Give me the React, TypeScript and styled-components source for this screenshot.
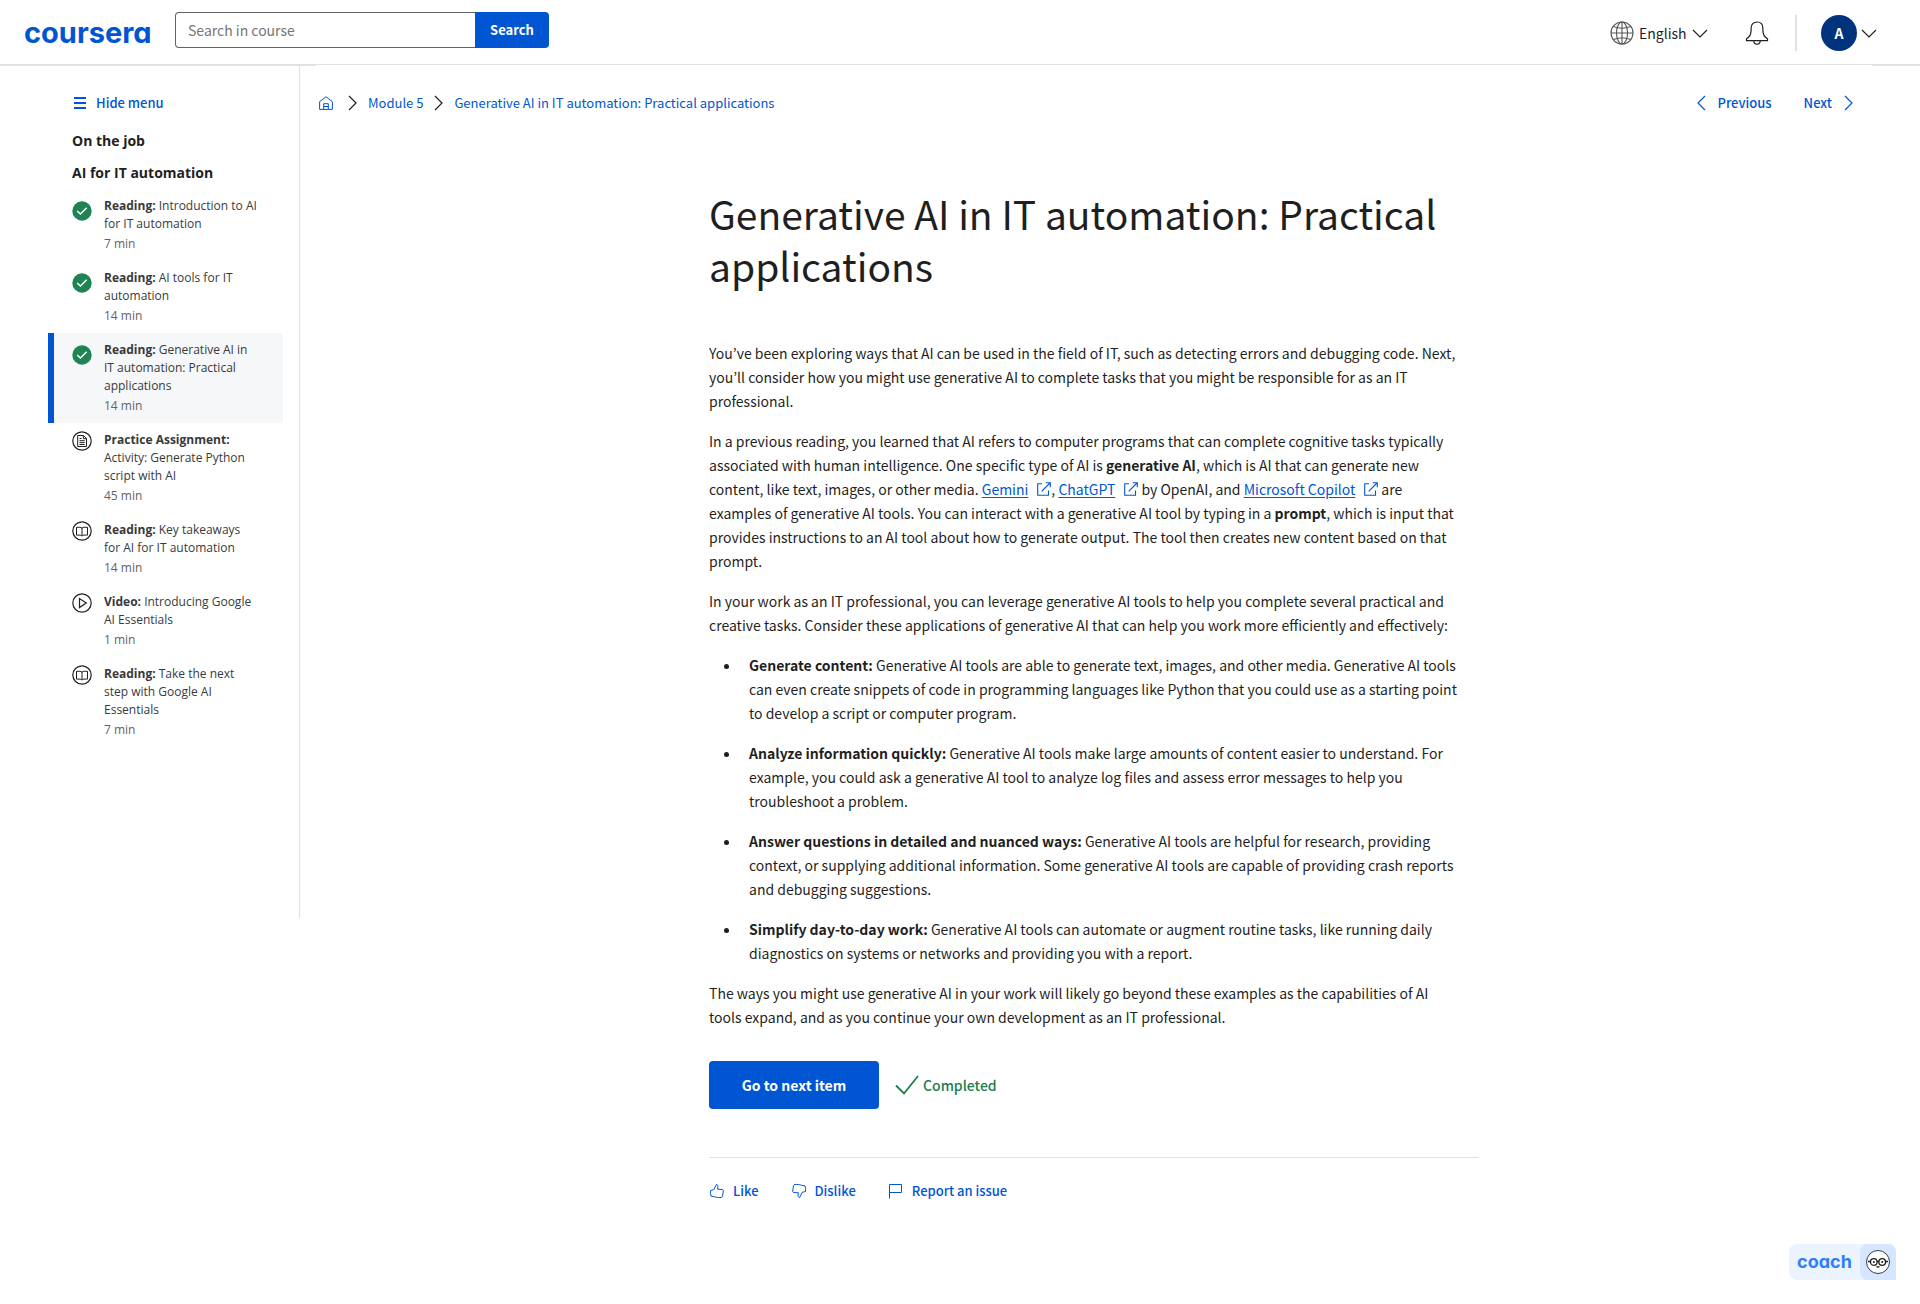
import React from "react";
import styled, { createGlobalStyle } from "styled-components";

const sans = `"Source Sans Pro", "Noto Sans CJK JP", "Noto Sans CJK SC", sans-serif`;
const openSans = `"Open Sans", "Noto Sans", sans-serif`;
const logoFont = `Inter, "Open Sans", sans-serif`;

const blue = "#0056d2";
const ink = "#1f1f1f";
const line = "#e1e1e1";
const green = "#1d7c50";

const GlobalStyle = createGlobalStyle`
  *, *::before, *::after { box-sizing: border-box; }
  body { margin: 0; background: #fff; color: ${ink}; font-family: ${sans}; font-size: 14px; line-height: 24px; }
  button, input, select { font: inherit; color: inherit; margin: 0; padding: 0; border: 0; background: none; }
  button { cursor: pointer; }
  a { color: ${blue}; text-decoration: none; }
  svg { display: block; flex: none; }
  h1, h2, p, ul { margin: 0; padding: 0; }
`;

const Header = styled.header`
  display: flex;
  align-items: center;
  height: 66px;
  padding: 2px 43px 0 24px;
  border-bottom: 2px solid ${line};
`;

const Logo = styled.a`
  width: 127px;
  font: 700 29px/36px ${logoFont};
  font-feature-settings: "cv11";
`;

const SearchForm = styled.form`
  display: flex;
  height: 36px;
  margin: 0 auto 6px 24px;
`;

const SearchInput = styled.input`
  width: 300px;
  padding: 0 12px;
  border: 1px solid #636363;
  border-right: 0;
  border-radius: 4px 0 0 4px;
  &::placeholder { color: #757575; opacity: 1; }
`;

const SearchButton = styled.button`
  width: 74px;
  border-radius: 0 4px 4px 0;
  background: ${blue};
  color: #fff;
  font-size: 13px;
  font-weight: 700;
`;

const Language = styled.label`
  display: flex;
  align-items: center;
  gap: 5px;
`;

const LanguageSelect = styled.select`
  appearance: none;
  height: 24px;
`;

const BellButton = styled.button`
  margin: 0 26px 0 37px;
`;

const Account = styled.button`
  display: flex;
  align-items: center;
  gap: 4px;
  padding-left: 24px;
  border-left: 2px solid ${line};
`;

const Avatar = styled.span`
  width: 36px;
  border-radius: 50%;
  background: #00337d;
  color: #fff;
  font-weight: 700;
  line-height: 36px;
  text-align: center;
`;

const Page = styled.div`
  display: flex;
  align-items: flex-start;
`;

const Sidebar = styled.aside`
  flex: none;
  width: 300px;
  padding: 25px 16px 171px 48px;
  border-right: 1px solid ${line};
`;

const MenuToggle = styled.button`
  display: flex;
  align-items: center;
  gap: 10px;
  height: 24px;
  margin: 0 0 14px 26px;
  color: ${blue};
  font-size: 13px;
  font-weight: 500;
`;

const SectionTitle = styled.h2`
  padding-left: 24px;
  font: 700 14px/24px ${openSans};
  margin-bottom: 8px;
  & + & { margin-bottom: 4px; }
`;

const Lessons = styled.ul`
  list-style: none;
`;

const Lesson = styled.a<{ $active?: boolean }>`
  display: flex;
  gap: 12px;
  padding: 8px 24px 8px 18px;
  border-left: 6px solid ${(p) => (p.$active ? blue : "transparent")};
  background: ${(p) => (p.$active ? "#f5f7f8" : "transparent")};
  color: #373a3c;
  font: 400 12px/18px ${openSans};
`;

const LessonIcon = styled.span<{ $done: boolean }>`
  padding-top: ${(p) => (p.$done ? 4 : 0)}px;
`;

const LessonKind = styled.strong`
  font-weight: 700;
`;

const Duration = styled.span`
  display: block;
  padding-top: 2px;
  color: #636363;
`;

const Main = styled.main`
  flex: 1;
  min-width: 0;
  margin: -1px 48px 0 16px;
  background: #fff;
`;

const TopNav = styled.div`
  display: flex;
  align-items: center;
  justify-content: space-between;
  padding: 26px 19px 0 3px;
  font-size: 13px;
`;

const Crumbs = styled.nav`
  display: flex;
  align-items: center;
  gap: 11px;
`;

const HomeLink = styled.a`
  margin-right: 4px;
`;

const Pager = styled.nav`
  display: flex;
  gap: 32px;
  font-weight: 500;
`;

const PagerLink = styled.a`
  display: flex;
  align-items: center;
  gap: 12px;
`;

const Article = styled.article`
  max-width: 770px;
  margin: 0 auto;
  padding: 72px 0 96px;
`;

const Title = styled.h1`
  margin-bottom: 50px;
  font-size: 39px;
  font-weight: 400;
  line-height: 52px;
`;

const Body = styled.div`
  padding-right: 20px;
`;

const Paragraph = styled.p`
  margin-bottom: 16px;
`;

const Bullets = styled.ul`
  padding-left: 32px;
`;

const Bullet = styled.li`
  margin-bottom: 16px;
  padding-left: 8px;
`;

const ExternalLink = styled.a`
  text-decoration: underline;
  text-underline-offset: 2px;
`;

const ExternalIcon = styled.svg`
  display: inline-block;
  margin: 0 0 0 9px;
  vertical-align: -1px;
`;

const Actions = styled.div`
  display: flex;
  align-items: center;
  gap: 16px;
  margin-top: 32px;
`;

const NextButton = styled.button`
  width: 170px;
  height: 48px;
  border-radius: 4px;
  background: ${blue};
  color: #fff;
  font-weight: 700;
`;

const Completed = styled.span`
  display: flex;
  align-items: center;
  gap: 4px;
  color: ${green};
  font-weight: 500;
`;

const Feedback = styled.div`
  display: flex;
  gap: 32px;
  margin-top: 48px;
  padding-top: 21px;
  border-top: 1px solid ${line};
`;

const FeedbackButton = styled.button`
  display: flex;
  align-items: center;
  gap: 8px;
  color: ${blue};
  font-size: 13px;
  font-weight: 500;
`;

const Coach = styled.button`
  position: fixed;
  right: 24px;
  bottom: 24px;
  display: flex;
  border-radius: 8px 8px 0 8px;
  background: #ebf3ff;
  color: #2d7ff9;
  font: 700 18px/36px ${logoFont};
  font-feature-settings: "cv11";
`;

const CoachLabel = styled.span`
  width: 71px;
  text-align: center;
`;

const CoachFace = styled.span`
  padding: 6px;
  border-radius: 8px 8px 0 8px;
  background: #d6e6ff;
`;

const paths = {
  down: "M1 1l7 7 7-7",
  right: "M1 1l7 7-7 7",
  left: "M8 1L1 8l7 7",
};

function Chevron({ dir, color = ink }: { dir: keyof typeof paths; color?: string }) {
  const [w, h] = dir === "down" ? [16, 9] : [9, 16];
  return (
    <svg width={w} height={h} fill="none" stroke={color} strokeWidth="1.2" aria-hidden="true">
      <path d={paths[dir]} />
    </svg>
  );
}

function DoneIcon() {
  return (
    <svg width="20" height="20" viewBox="0 0 20 20" fill="none" aria-label="Completed">
      <circle cx="10" cy="10" r="9.7" fill="#1f8354" />
      <path d="M5.2 9.9l3.2 3.2 6.3-6.4" stroke="#fff" strokeWidth="1.4" />
    </svg>
  );
}

function KindIcon({ kind }: { kind: string }) {
  return (
    <svg width="20" height="20" viewBox="0 0 20 20" fill="none" stroke={ink} aria-hidden="true">
      <circle cx="10" cy="10" r="9.2" strokeWidth="1.2" />
      {kind === "Video:" && <path d="M7.5 5.6v9l6.8-4.5z" strokeWidth="1.2" />}
      {kind === "Reading:" && (
        <path d="M10 7v8.2M10 7.2C9.4 6.5 8.7 6.3 7.8 6.3H4.5v7.8h3.7c.8 0 1.4.3 1.8 1 .4-.7 1-1 1.8-1h3.7V6.300h-3.300c-.9 0-1.6.2-2.200.9z" />
      )}
      {kind === "Practice Assignment:" && (
        <path d="M5.7 4.5h5.800l3 3v8H5.7zM11.3 4.5v3.2h3.200M7.5 7.5h2M7.5 9.7h5.200M7.5 11.6h5.200M7.5 13.5h5.200" />
      )}
    </svg>
  );
}

function External() {
  return (
    <ExternalIcon width="14" height="14" viewBox="0 0 14 14" fill="none" stroke={blue} strokeWidth="1.1" aria-hidden="true">
      <path d="M5 1.8H.7v11.500h10.800V8.5M4.7 9.3L13 1M8.7.7h4.600v4.600" />
    </ExternalIcon>
  );
}

const lessons = [
  { kind: "Reading:", title: "Introduction to AI for IT automation", time: "7 min", done: true },
  { kind: "Reading:", title: "AI tools for IT automation", time: "14 min", done: true },
  { kind: "Reading:", title: "Generative AI in IT automation: Practical applications", time: "14 min", done: true, active: true },
  { kind: "Practice Assignment:", title: "Activity: Generate Python script with AI", time: "45 min", done: false },
  { kind: "Reading:", title: "Key takeaways for AI for IT automation", time: "14 min", done: false },
  { kind: "Video:", title: "Introducing Google AI Essentials", time: "1 min", done: false },
  { kind: "Reading:", title: "Take the next step with Google AI Essentials", time: "7 min", done: false },
];

const bullets = [
  {
    lead: "Generate content:",
    text: "Generative AI tools are able to generate text, images, and other media. Generative AI tools can even create snippets of code in programming languages like Python that you could use as a starting point to develop a script or computer program.",
  },
  {
    lead: "Analyze information quickly:",
    text: "Generative AI tools make large amounts of content easier to understand. For example, you could ask a generative AI tool to analyze log files and assess error messages to help you troubleshoot a problem.",
  },
  {
    lead: "Answer questions in detailed and nuanced ways:",
    text: "Generative AI tools are helpful for research, providing context, or supplying additional information. Some generative AI tools are capable of providing crash reports and debugging suggestions.",
  },
  {
    lead: "Simplify day-to-day work:",
    text: "Generative AI tools can automate or augment routine tasks, like running daily diagnostics on systems or networks and providing you with a report.",
  },
];

export default function App() {
  return (
    <>
      <GlobalStyle />
      <Header>
        <Logo href="#">coursera</Logo>
        <SearchForm role="search" onSubmit={(e) => e.preventDefault()}>
          <SearchInput type="text" placeholder="Search in course" aria-label="Search in course" />
          <SearchButton type="submit">Search</SearchButton>
        </SearchForm>
        <Language>
          <svg width="24" height="24" viewBox="0 0 24 24" fill="none" stroke="#555" strokeWidth="1.1" aria-hidden="true">
            <circle cx="12" cy="12" r="11" />
            <ellipse cx="12" cy="12" rx="5.5" ry="11" />
            <path d="M12 1v22M1 12h22M3.5 5.500c5 2 12 2 17 0M3.5 18.500c5-2 12-2 17 0" />
          </svg>
          <LanguageSelect aria-label="Language" defaultValue="en">
            <option value="en">English</option>
          </LanguageSelect>
          <Chevron dir="down" />
        </Language>
        <BellButton type="button" aria-label="Notifications">
          <svg width="24" height="24" viewBox="0 0 24 24" fill="none" stroke={ink} strokeWidth="1.2" aria-hidden="true">
            <path d="M1.5 19.6v-1.800c2.800-1.600 4.600-4.300 4.600-8V7.3C6.1 3.4 8.5 1 12 1s5.900 2.400 5.900 6.300v2.500c0 3.700 1.800 6.400 4.600 8v1.800zM8.8 19.8c0 2 1.300 3.400 3.200 3.400s3.200-1.400 3.200-3.400" />
          </svg>
        </BellButton>
        <Account type="button" aria-label="Account menu">
          <Avatar>A</Avatar>
          <Chevron dir="down" />
        </Account>
      </Header>

      <Page>
        <Sidebar>
          <MenuToggle type="button">
            <svg width="12" height="12" stroke={blue} strokeWidth="2" aria-hidden="true">
              <path d="M0 1h12M0 6h12M0 11h12" />
            </svg>
            Hide menu
          </MenuToggle>
          <SectionTitle>On the job</SectionTitle>
          <SectionTitle>AI for IT automation</SectionTitle>
          <Lessons>
            {lessons.map((l) => (
              <li key={l.title}>
                <Lesson href="#" $active={l.active}>
                  <LessonIcon $done={l.done}>{l.done ? <DoneIcon /> : <KindIcon kind={l.kind} />}</LessonIcon>
                  <span>
                    <LessonKind>{l.kind}</LessonKind> {l.title}
                    <Duration>{l.time}</Duration>
                  </span>
                </Lesson>
              </li>
            ))}
          </Lessons>
        </Sidebar>

        <Main>
          <TopNav>
            <Crumbs aria-label="Breadcrumb">
              <HomeLink href="#" aria-label="Home">
                <svg width="14" height="14" viewBox="0 0 14 14" fill="none" stroke={blue} aria-hidden="true">
                  <path d="M.6 5.7L7 .8l6.400 4.900v7.700H.6zM4.7 13.2V7.7h4.600v5.500M4.7 10.5h4.600" />
                </svg>
              </HomeLink>
              <Chevron dir="right" />
              <a href="#">Module 5</a>
              <Chevron dir="right" />
              <a href="#">Generative AI in IT automation: Practical applications</a>
            </Crumbs>
            <Pager aria-label="Items">
              <PagerLink href="#">
                <Chevron dir="left" color={blue} />
                Previous
              </PagerLink>
              <PagerLink href="#">
                Next
                <Chevron dir="right" color={blue} />
              </PagerLink>
            </Pager>
          </TopNav>

          <Article>
            <Title>Generative AI in IT automation: Practical applications</Title>
            <Body>
              <Paragraph>
                You’ve been exploring ways that AI can be used in the field of IT, such as detecting errors and
                debugging code. Next, you’ll consider how you might use generative AI to complete tasks that you might
                be responsible for as an IT professional.
              </Paragraph>
              <Paragraph>
                In a previous reading, you learned that AI refers to computer programs that can complete cognitive
                tasks typically associated with human intelligence. One specific type of AI is{" "}
                <strong>generative AI</strong>, which is AI that can generate new content, like text, images, or other
                media. <ExternalLink href="#">Gemini</ExternalLink>
                <External />, <ExternalLink href="#">ChatGPT</ExternalLink>
                <External /> by OpenAI, and <ExternalLink href="#">Microsoft Copilot</ExternalLink>
                <External /> are examples of generative AI tools. You can interact with a generative AI tool by typing
                in a <strong>prompt</strong>, which is input that provides instructions to an AI tool about how to
                generate output. The tool then creates new content based on that prompt.
              </Paragraph>
              <Paragraph>
                In your work as an IT professional, you can leverage generative AI tools to help you complete several
                practical and creative tasks. Consider these applications of generative AI that can help you work more
                efficiently and effectively:
              </Paragraph>
              <Bullets>
                {bullets.map((b) => (
                  <Bullet key={b.lead}>
                    <strong>{b.lead}</strong> {b.text}
                  </Bullet>
                ))}
              </Bullets>
              <Paragraph>
                The ways you might use generative AI in your work will likely go beyond these examples as the
                capabilities of AI tools expand, and as you continue your own development as an IT professional.
              </Paragraph>
            </Body>
            <Actions>
              <NextButton type="button">Go to next item</NextButton>
              <Completed>
                <svg width="24" height="20" viewBox="0 0 24 20" fill="none" stroke={green} strokeWidth="1.8" aria-hidden="true">
                  <path d="M1 10.5l8 8L23 1" />
                </svg>
                Completed
              </Completed>
            </Actions>
            <Feedback>
              <FeedbackButton type="button">
                <svg width="16" height="16" viewBox="0 0 16 16" fill="none" stroke={blue} aria-hidden="true">
                  <path d="M1.5 7.5l3.300-.8 2.500-5.200c1.500.2 1.800 1.200 1.600 2.100l-.3 2.600 5 .3c.6.3.8.9.7 1.500l-.8 5.300c-.2.8-.7 1.200-1.500 1.200-2.500.2-4.800 0-6.500-.8l-3.500-.6c-.6-1.800-.8-3.800-.5-5.600z" />
                </svg>
                Like
              </FeedbackButton>
              <FeedbackButton type="button">
                <svg width="16" height="16" viewBox="0 0 16 16" fill="none" stroke={blue} aria-hidden="true">
                  <path d="M14.5 8.5l-3.300.8-2.500 5.200c-1.500-.2-1.800-1.200-1.600-2.100l.3-2.600-5-.3c-.6-.3-.8-.9-.7-1.500l.8-5.300c.2-.8.7-1.200 1.500-1.200 2.500-.2 4.800 0 6.500.8l3.500.6c.6 1.800.8 3.800.5 5.600z" />
                </svg>
                Dislike
              </FeedbackButton>
              <FeedbackButton type="button">
                <svg width="16" height="16" viewBox="0 0 16 16" fill="none" stroke={blue} aria-hidden="true">
                  <path d="M1.5 15.5v-14h12v8h-12" />
                </svg>
                Report an issue
              </FeedbackButton>
            </Feedback>
          </Article>
        </Main>
      </Page>

      <Coach type="button">
        <CoachLabel>coach</CoachLabel>
        <CoachFace>
          <svg width="24" height="24" viewBox="0 0 24 24" fill="none" stroke="#333b4f" aria-hidden="true">
            <circle cx="12" cy="12" r="11.5" fill="#fff" />
            <g stroke={ink} strokeWidth="1.3">
              <circle cx="7.8" cy="12" r="3.3" />
              <circle cx="16.2" cy="12" r="3.3" />
              <path d="M2 11.5h2.500M19.5 11.5H22M11 11.5h2M10.5 16.5c1 .7 2 .7 3 0" />
            </g>
            <g fill={ink} stroke="none">
              <circle cx="7.8" cy="12" r="1" />
              <circle cx="16.2" cy="12" r="1" />
            </g>
          </svg>
        </CoachFace>
      </Coach>
    </>
  );
}
